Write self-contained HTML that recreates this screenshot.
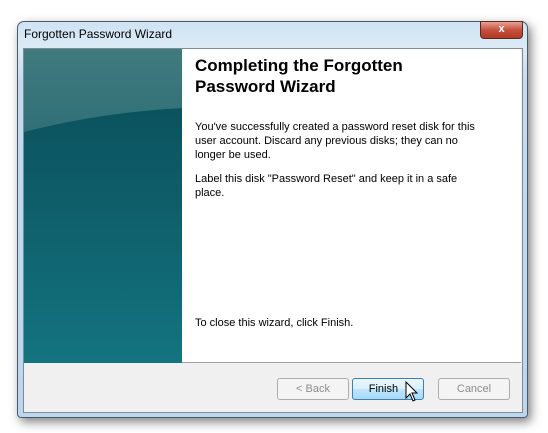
<!DOCTYPE html>
<html><head><style>
html{overflow:hidden}
body{margin:0;width:548px;height:433px;background:#fff;position:relative;overflow:hidden;font-family:"Liberation Sans",sans-serif}
.win{position:absolute;left:17px;top:21px;width:509px;height:395px;border-radius:7px 7px 4px 4px;background:linear-gradient(180deg,#cfe3f3 0,#dceaf6 25px,#c4dbef 60px,#bcd6ee 100%);border:1px solid #4a5a6a;box-shadow:3px 4px 10px rgba(0,0,0,.5)}
.title{position:absolute;left:24px;top:27px;font-size:12px;color:#000}
.close{position:absolute;left:480px;top:21px;width:41px;height:16px;border-radius:0 0 4px 4px;background:linear-gradient(#e8a294,#c6503d 50%,#b23a26);border:1px solid #5a2a20;color:#fff;font-weight:bold;font-size:11px;text-align:center;line-height:14px}
.client{position:absolute;left:23px;top:48px;width:498px;height:363px;border:1px solid #7f8a96;background:#f0f0f0}
.side{position:absolute;left:24px;top:49px;width:158px;height:314px;background:linear-gradient(180deg,#3f7a7d 0,#35737a 60px,#2d6c72 100px)}
.curve{position:absolute;left:24px;top:49px;width:158px;height:314px;overflow:hidden}
.curve div{position:absolute;left:-500px;top:58px;width:1400px;height:1200px;border-radius:50%;background:linear-gradient(180deg,#0b535e,#0e5e6a 8%,#137581 22%)}
.main{position:absolute;left:182px;top:49px;width:339px;height:313px;background:#fff;border-bottom:1px solid #a0a0a0}
h1{position:absolute;left:195px;top:55px;margin:0;font-size:17px;line-height:21px;font-weight:bold;color:#000}
p{position:absolute;left:195px;margin:0;font-size:11px;line-height:14px;color:#000}
.btn{position:absolute;top:378px;width:70px;height:20px;border:1px solid #adadad;border-radius:3px;background:#f4f4f4;font-size:11px;text-align:center;line-height:20px;color:#8d8d8d}
.fin{border-color:#3c7fb1;background:linear-gradient(#eaf6fd,#d9f0fc 50%,#bee6fd 50%,#a7d9f5);color:#000}
</style></head><body>
<div class="win"></div>
<div class="title">Forgotten Password Wizard</div>
<div class="close">x</div>
<div class="client"></div>
<div class="side"></div>
<div class="curve"><div></div></div>
<div class="main"></div>
<h1>Completing the Forgotten<br>Password Wizard</h1>
<p style="top:120px">You've successfully created a password reset disk for this<br>user account. Discard any previous disks; they can no<br>longer be used.</p>
<p style="top:172px">Label this disk "Password Reset" and keep it in a safe<br>place.</p>
<p style="top:316px">To close this wizard, click Finish.</p>
<div class="btn" style="left:277px">&lt; Back</div>
<div class="btn fin" style="left:352px">Finish&nbsp;&nbsp;&nbsp;</div>
<div class="btn" style="left:438px">Cancel</div>
<svg style="position:absolute;left:405px;top:381px" width="14" height="22" viewBox="0 0 14 22"><path d="M1 1 L1 17 L5 13 L8 20 L10 19 L7 12 L12 12 Z" fill="#fff" stroke="#000" stroke-width="1"/></svg>
</body></html>
